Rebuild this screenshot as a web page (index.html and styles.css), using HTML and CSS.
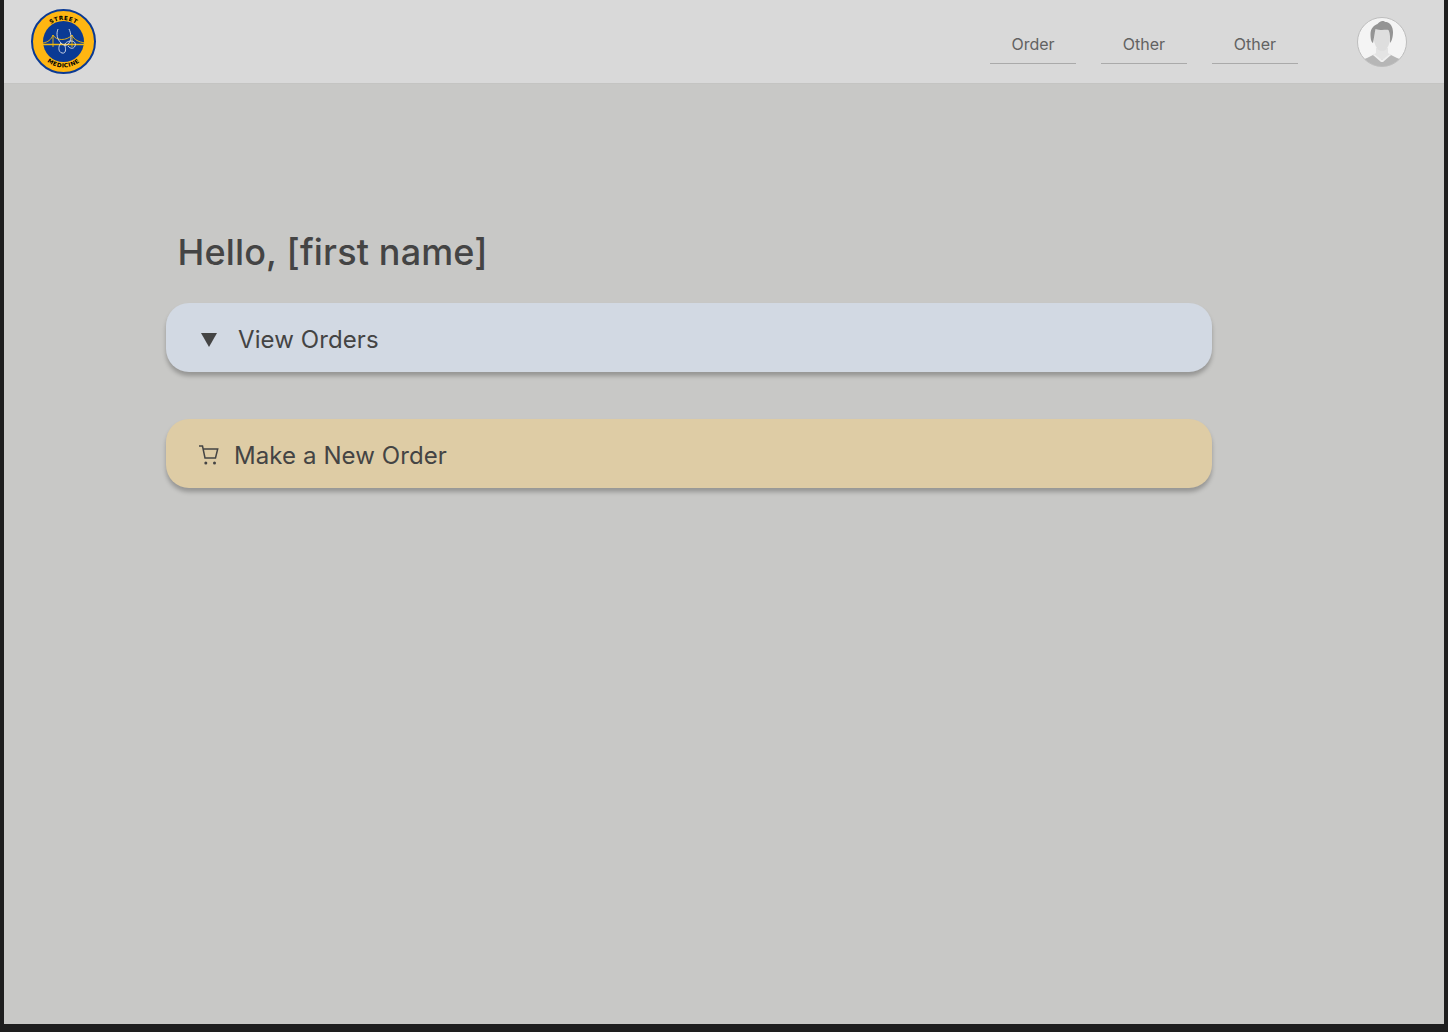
FILE: index.html
```html
<!DOCTYPE html>
<html lang="en">
<head>
<meta charset="utf-8">
<title>Street Medicine</title>
<link rel="stylesheet" href="styles.css">
</head>
<body>
<div class="frame">
  <header class="topbar">
    <svg class="logo" viewBox="0 0 65 65" aria-label="Street Medicine logo">
      <defs>
        <path id="arcTop" d="M11 32.500a21.500 21.500 0 0 1 43 0"/>
        <path id="arcBottom" d="M6.500 32.500a26 26 0 0 0 52 0"/>
      </defs>
      <circle cx="32.500" cy="32.500" r="31.500" fill="#ffb612" stroke="#0a3a94" stroke-width="2"/>
      <circle cx="32.500" cy="32.500" r="20.500" fill="#0a3a94"/>
      <text class="logo-text"><textPath href="#arcTop" startOffset="50%" text-anchor="middle">STREET</textPath></text>
      <text class="logo-text"><textPath href="#arcBottom" startOffset="50%" text-anchor="middle">MEDICINE</textPath></text>
      <path d="M12 35.500h42" stroke="#f0b90f" stroke-width="1.400" fill="none"/>
      <path d="M12 34C17 33 20 31 22 26C25 32 36 32 41 26C43 31 48 33 54 34M22 26v12M41 26v12" stroke="#f0b90f" stroke-width="0.900" fill="none"/>
      <path d="M27 20c-2 5-1 10 3 14c3 3 6 3 8 0c3-4 2-10 0-14M30 34c-3 3-3 9 1 10c4 1 4-4 3-7c-1-3 3-5 6-5c4 0 5 3 4 5c-1 3-5 3-7 0" stroke="#f2f2f2" stroke-width="0.800" fill="none"/>
    </svg>
    <nav class="nav">
      <a class="nav-link">Order</a>
      <a class="nav-link">Other</a>
      <a class="nav-link">Other</a>
    </nav>
    <svg class="avatar" viewBox="0 0 50 50" aria-label="User avatar">
      <defs><clipPath id="avatarClip"><circle cx="25" cy="25" r="24.500"/></clipPath></defs>
      <circle cx="25" cy="25" r="24.500" fill="#f4f4f4"/>
      <g clip-path="url(#avatarClip)">
        <path d="M4 50c0-5 2-8 6-9l8-4h14l8 4c4 1 6 4 6 9z" fill="#b6b6b6"/>
        <path d="M19 31h12v5l3 2-9 5-9-5 3-2z" fill="#e4e4e4"/>
        <path d="M17 37l8 6 8-6 1 1-8 7h-2l-8-7z" fill="#f0f0f0"/>
        <path d="M16.500 18c0 8 3 16 8.500 16s8.500-8 8.500-16-3-9-8.500-9-8.500 1-8.500 9z" fill="#dedede"/>
        <path d="M16 26c-2-1-2.500-5-2.500-9 0-6 4-9 7-10 1-2 4-3.500 6-3 1 .5 1.500 1 3 1 4 1 6.500 5 6.500 10 0 4-1 9-3 11 0-5 .5-9-1.500-13-3-1-6 1-13-1-1 4-1.500 9-2.500 14z" fill="#949494"/>
      </g>
      <circle cx="25" cy="25" r="24.500" fill="none" stroke="#bdbdbd" stroke-width="1"/>
    </svg>
  </header>
  <main class="content">
    <h1 class="greeting">Hello, [first name]</h1>
    <button class="bar bar-blue" type="button">
      <svg class="triangle" viewBox="0 0 16 14"><path d="M0 0h16L8 14z"/></svg>
      <span class="bar-label">View Orders</span>
    </button>
    <button class="bar bar-tan" type="button">
      <svg class="cart" viewBox="0 0 20 20"><path d="M0 1h3.500l2.500 12h10.500l2.200-9H4.300" fill="none" stroke="#444" stroke-width="1.500"/><circle cx="6.800" cy="18" r="1.500" fill="#444"/><circle cx="15.500" cy="18" r="1.500" fill="#444"/></svg>
      <span class="bar-label">Make a New Order</span>
    </button>
  </main>
</div>
</body>
</html>
```
FILE: styles.css
```css
* { box-sizing: border-box; }
html, body { height: 100%; }
body {
  margin: 0;
  background: #1e1e1e;
  font-family: Inter, "Liberation Sans", sans-serif;
  padding: 0 4px 8px;
  overflow: hidden;
}
.frame {
  height: 100%;
  background: #c8c8c6;
  display: flex;
  flex-direction: column;
}
.topbar {
  height: 83px;
  flex: none;
  background: #d9d9d9;
  display: flex;
  align-items: center;
  padding: 0 37px 0 27px;
  box-shadow: 0 1px 1px rgba(0,0,0,0.02);
}
.logo { width: 65px; height: 65px; flex: none; }
.logo-text {
  font-family: "DejaVu Sans", sans-serif;
  font-size: 5.800px;
  font-weight: 700;
  letter-spacing: 0.450px;
  fill: #000;
}
.nav {
  margin-left: auto;
  display: flex;
  gap: 25px;
  margin-right: 59px;
  padding-top: 9px;
}
.nav-link {
  width: 86px;
  height: 36px;
  display: flex;
  align-items: center;
  justify-content: center;
  padding-bottom: 4px;
  border-bottom: 1px solid #aaa;
  color: #626262;
  font-size: 16px;
}
.avatar { width: 50px; height: 50px; flex: none; }
.content {
  padding: 147px 0 0 162px;
  width: 1208px;
  display: flex;
  flex-direction: column;
}
.greeting {
  margin: 0 0 29px 11.500px;
  font-size: 36px;
  line-height: 44px;
  font-weight: 450;
  letter-spacing: 0.150px;
  color: #444;
}
.bar {
  width: 100%;
  height: 69px;
  border: 0;
  border-radius: 23px;
  display: flex;
  align-items: center;
  font-family: inherit;
  font-size: 24px;
  color: #444;
  box-shadow: 0 4px 4px rgba(0,0,0,0.25);
  padding: 0;
}
.bar-label { letter-spacing: 0.090px; padding-top: 3px; }
.bar-blue {
  background: #d2d9e3;
  margin-bottom: 47px;
  padding-left: 35px;
  gap: 21px;
}
.bar-tan {
  background: #decca5;
  padding-left: 33px;
  gap: 15px;
}
.triangle { width: 16px; height: 14px; fill: #444; flex: none; margin-top: 5px; }
.cart { width: 20px; height: 20px; flex: none; margin-top: 3px; }
```
